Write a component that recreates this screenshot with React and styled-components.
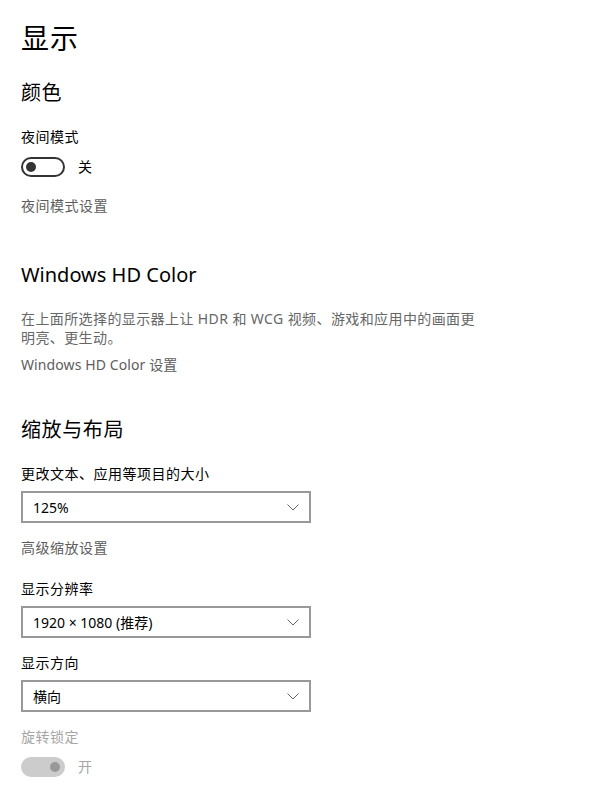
import React from "react";
import styled, { createGlobalStyle } from "styled-components";

function App() {
  return (
    <Page>
      <GlobalStyle />
      <PageTitle>显示</PageTitle>

      <SectionTitle $gap={21} $cjk>颜色</SectionTitle>
      <Label $gap={20}>夜间模式</Label>
      <ToggleRow $gap={10}>
        <Toggle />
        <ToggleText>关</ToggleText>
      </ToggleRow>
      <Link $gap={19}>夜间模式设置</Link>

      <SectionTitle $gap={45}>Windows HD Color</SectionTitle>
      <Description>
        在上面所选择的显示器上让 HDR 和 WCG 视频、游戏和应用中的画面更
        <br />
        明亮、更生动。
      </Description>
      <Link $gap={8} $latin>Windows HD Color 设置</Link>

      <SectionTitle $gap={41} $cjk>缩放与布局</SectionTitle>
      <Label $gap={20}>更改文本、应用等项目的大小</Label>
      <Select value="125%" />
      <Link $gap={15}>高级缩放设置</Link>

      <Label $gap={21}>显示分辨率</Label>
      <Select value="1920 × 1080 (推荐)" />

      <Label $gap={15}>显示方向</Label>
      <Select value="横向" />

      <Label $gap={15} $disabled>
        旋转锁定
      </Label>
      <ToggleRow $gap={10}>
        <Toggle $on $disabled />
        <ToggleText $disabled>开</ToggleText>
      </ToggleRow>
    </Page>
  );
}

function Toggle({ $on, $disabled }) {
  return (
    <Track $on={$on} $disabled={$disabled}>
      <Knob $on={$on} $disabled={$disabled} />
    </Track>
  );
}

function Select({ value }) {
  return (
    <SelectBox>
      <span>{value}</span>
      <svg width="12" height="7" viewBox="0 0 12 7">
        <path d="M0.5 0.5 L6 6 L11.5 0.5" fill="none" stroke="#666" strokeWidth="1" />
      </svg>
    </SelectBox>
  );
}

const GlobalStyle = createGlobalStyle`
  body {
    margin: 0;
    background: #fff;
    font-family: "Noto Sans", "Noto Sans CJK SC", sans-serif;
    color: #000;
  }
`;

const Page = styled.div`
  padding: 18px 21px 20px;
  display: flex;
  flex-direction: column;
  align-items: flex-start;
`;

const PageTitle = styled.h1`
  margin: 0;
  font-size: 28px;
  line-height: 40px;
  font-weight: 400;
  letter-spacing: 1px;
`;

const SectionTitle = styled.h2`
  margin: ${(p) => p.$gap}px 0 0;
  font-size: 20px;
  line-height: 28px;
  font-weight: 400;
  letter-spacing: ${(p) => (p.$cjk ? "0.6px" : "0")};
`;

const Label = styled.div`
  margin-top: ${(p) => p.$gap}px;
  font-size: 14px;
  line-height: 20px;
  letter-spacing: 0.5px;
  color: ${(p) => (p.$disabled ? "#a6a6a6" : "#000")};
`;

const Link = styled.div`
  margin-top: ${(p) => p.$gap}px;
  font-size: 14px;
  line-height: 20px;
  letter-spacing: ${(p) => (p.$latin ? "0.1px" : "0.5px")};
  color: #5d5d5d;
`;

const Description = styled.p`
  margin: 20px 0 0;
  font-size: 14px;
  line-height: 19px;
  letter-spacing: 0.4px;
  color: #666;
`;

const ToggleRow = styled.div`
  margin-top: ${(p) => p.$gap}px;
  display: flex;
  align-items: center;
  gap: 13px;
  height: 20px;
`;

const Track = styled.div`
  box-sizing: border-box;
  width: 44px;
  height: 20px;
  border-radius: 10px;
  border: 2px solid ${(p) => (p.$disabled ? "#cccccc" : "#333")};
  background: ${(p) => (p.$disabled ? "#cccccc" : "#fff")};
  display: flex;
  align-items: center;
  justify-content: ${(p) => (p.$on ? "flex-end" : "flex-start")};
  padding: 0 3px;
`;

const Knob = styled.div`
  width: 10px;
  height: 10px;
  border-radius: 50%;
  background: ${(p) => (p.$disabled ? "#999" : "#333")};
`;

const ToggleText = styled.span`
  font-size: 14px;
  line-height: 20px;
  color: ${(p) => (p.$disabled ? "#a6a6a6" : "#000")};
`;

const SelectBox = styled.div`
  box-sizing: border-box;
  margin-top: 7px;
  width: 290px;
  height: 32px;
  border: 2px solid #999;
  background: #fff;
  display: flex;
  align-items: center;
  justify-content: space-between;
  padding: 0 10px 0 10px;
  font-size: 14px;
  color: #000;
`;

export default App;
